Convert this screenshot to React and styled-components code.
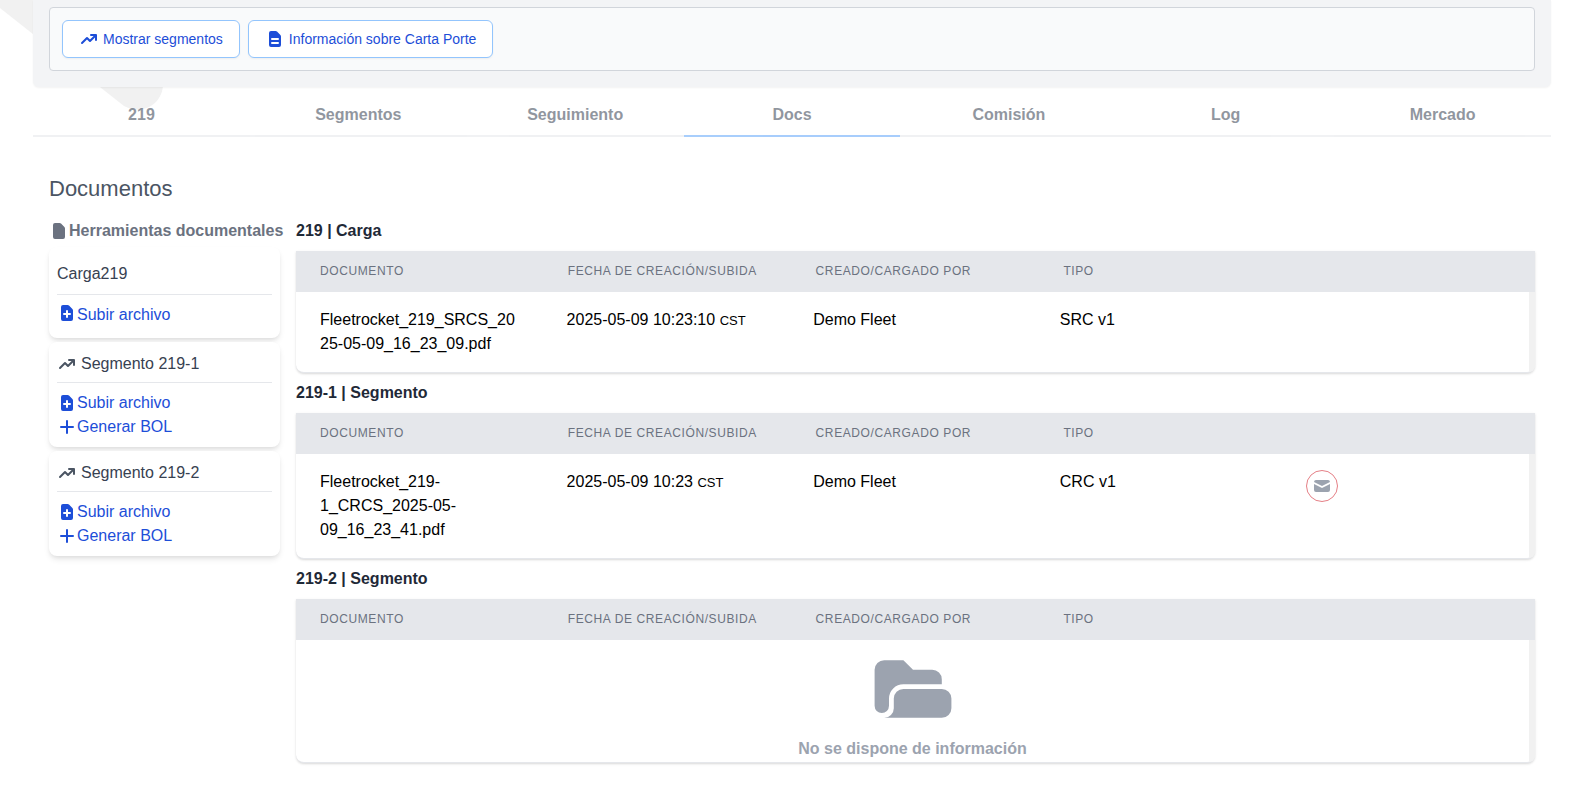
import React from 'react';
import styled, { createGlobalStyle } from 'styled-components';
import {
  HiDocument,
  HiDocumentAdd,
  HiDocumentText,
  HiFolderOpen,
  HiMail,
  HiPlus,
  HiTrendingUp,
} from 'react-icons/hi';

const GlobalStyle = createGlobalStyle`
  *, *::before, *::after {
    box-sizing: border-box;
  }

  body {
    margin: 0;
    background: #fff;
    color: #000;
    font-family: "Liberation Sans", Arial, sans-serif;
    font-size: 16px;
    line-height: 24px;
  }
`;

const Page = styled.div`
  position: relative;
  padding: 0 29px 0 33px;
`;

// decorative blob behind the header
const Backdrop = styled.svg`
  position: absolute;
  top: 0;
  left: 0;
  z-index: -1;
`;

const Panel = styled.header`
  padding: 7px 16px 16px;
  background: #f3f4f6;
  border-radius: 0 0 6px 6px;
  box-shadow: 0 1px 2px rgba(0, 0, 0, 0.05);
`;

const Toolbar = styled.div`
  display: flex;
  gap: 8px;
  padding: 12px;
  background: #f9fafb;
  border: 1px solid #d1d5db;
  border-radius: 4px;
`;

const ToolbarButton = styled.button`
  display: flex;
  align-items: center;
  gap: 4px;
  padding: 8px 16px;
  background: #fff;
  color: #1d4ed8;
  border: 1px solid #93c5fd;
  border-radius: 6px;
  box-shadow: 0 1px 2px rgba(0, 0, 0, 0.05);
  font-family: inherit;
  font-size: 14px;
  line-height: 20px;
  cursor: pointer;
`;

const Tabs = styled.nav`
  display: flex;
`;

const Tab = styled.a`
  flex: 1;
  padding: 16px 8px 8px;
  border-bottom: 2px solid ${({ $active }) => ($active ? '#60a5fa' : '#e5e7eb')};
  color: #374151;
  font-weight: 700;
  text-align: center;
  text-decoration: none;
  opacity: 0.55;
`;

const Content = styled.main`
  padding: 36px 16px 16px;
`;

const Title = styled.h1`
  margin: 0 0 6px;
  color: #4b5563;
  font-size: 22px;
  font-weight: 400;
  line-height: 32px;
`;

const Columns = styled.div`
  display: grid;
  grid-template-columns: 247px minmax(0, 1fr);
`;

const Sidebar = styled.aside`
  display: flex;
  flex-direction: column;
  gap: 4px;
  padding: 8px 16px 0 0;
`;

const SidebarTitle = styled.h2`
  display: flex;
  align-items: center;
  margin: 0;
  color: #6b7280;
  font-size: 16px;
  font-weight: 700;
  white-space: nowrap;

  svg {
    flex-shrink: 0;
  }
`;

const Card = styled.section`
  padding: ${({ $main }) => ($main ? '7px 8px 11px' : '8px')};
  background: #fff;
  border-radius: 8px;
  box-shadow: 0 4px 6px -1px rgba(0, 0, 0, 0.1), 0 2px 4px -1px rgba(0, 0, 0, 0.06);
`;

const CardTitle = styled.h3`
  display: flex;
  align-items: center;
  gap: 4px;
  margin: 0 0 8px;
  padding: ${({ $main }) => ($main ? '8px 0' : '2px 0 6px')};
  border-bottom: 1px solid #e5e7eb;
  color: #374151;
  font-size: 16px;
  font-weight: 400;

  svg {
    color: #4b5563;
  }
`;

const CardLink = styled.a`
  display: flex;
  align-items: ${({ $main }) => ($main ? 'flex-start' : 'center')};
  color: #1d4ed8;
  text-decoration: none;
`;

const SectionTitle = styled.h2`
  margin: 0;
  padding: 8px 0;
  color: #1f2937;
  font-size: 16px;
  font-weight: 700;
`;

const Table = styled.table`
  display: block;
  background: #fff;
  border-bottom: 1px solid #e5e7eb;
  border-radius: 0 0 8px 8px;
  box-shadow: 0 1px 3px rgba(0, 0, 0, 0.1), 0 1px 2px rgba(0, 0, 0, 0.06);
`;

const Head = styled.thead`
  display: block;
  background: #e5e7eb;
  border-bottom: 1px solid #e5e7eb;
`;

// the right border is the scroll gutter
const Body = styled.tbody`
  display: block;
  border-right: 6px solid #f1f1f1;
  border-bottom-right-radius: 6px;
`;

const Row = styled.tr`
  display: grid;
  grid-template-columns: repeat(5, minmax(0, 1fr));
`;

const HeadCell = styled.th`
  padding: 12px 24px;
  color: #6b7280;
  font-size: 12px;
  font-weight: 400;
  line-height: 16px;
  letter-spacing: 0.05em;
  text-align: left;
  text-transform: uppercase;
`;

const Cell = styled.td`
  padding: 16px 24px;
  overflow-wrap: break-word;
`;

const Zone = styled.small`
  font-size: 13px;
`;

const MailButton = styled.button`
  display: flex;
  align-items: center;
  justify-content: center;
  width: 32px;
  height: 32px;
  padding: 0;
  background: #fff;
  color: #9ca3af;
  border: 1px solid #e57f86;
  border-radius: 50%;
  cursor: pointer;
`;

const EmptyRow = styled.tr`
  display: block;
`;

const EmptyCell = styled.td`
  display: flex;
  flex-direction: column;
  align-items: center;
  padding: 1px 0;
  color: #9ca3af;
  font-weight: 700;
`;

const tabs = ['219', 'Segmentos', 'Seguimiento', 'Docs', 'Comisión', 'Log', 'Mercado'];

const columns = ['Documento', 'Fecha de creación/subida', 'Creado/cargado por', 'Tipo', ''];

const segments = ['Segmento 219-1', 'Segmento 219-2'];

const sections = [
  {
    title: '219 | Carga',
    docs: [
      {
        name: 'Fleetrocket_219_SRCS_2025-05-09_16_23_09.pdf',
        date: '2025-05-09 10:23:10',
        author: 'Demo Fleet',
        type: 'SRC v1',
      },
    ],
  },
  {
    title: '219-1 | Segmento',
    docs: [
      {
        name: 'Fleetrocket_219-1_CRCS_2025-05-09_16_23_41.pdf',
        date: '2025-05-09 10:23',
        author: 'Demo Fleet',
        type: 'CRC v1',
        mail: true,
      },
    ],
  },
  { title: '219-2 | Segmento', docs: [] },
];

const DocumentTable = ({ title, docs }) => (
  <section>
    <SectionTitle>{title}</SectionTitle>
    <Table aria-label={title}>
      <Head>
        <Row>
          {columns.map((column) => (
            <HeadCell key={column} scope="col">{column}</HeadCell>
          ))}
        </Row>
      </Head>
      <Body>
        {docs.map((doc) => (
          <Row key={doc.name}>
            <Cell>{doc.name}</Cell>
            <Cell>{doc.date} <Zone>CST</Zone></Cell>
            <Cell>{doc.author}</Cell>
            <Cell>{doc.type}</Cell>
            <Cell>
              {doc.mail && (
                <MailButton type="button" aria-label="Enviar por correo">
                  <HiMail size={20} />
                </MailButton>
              )}
            </Cell>
          </Row>
        ))}
        {docs.length === 0 && (
          <EmptyRow>
            <EmptyCell>
              <HiFolderOpen size={96} />
              No se dispone de información
            </EmptyCell>
          </EmptyRow>
        )}
      </Body>
    </Table>
  </section>
);

const App = () => {
  return (
    <Page>
      <GlobalStyle />
      <Backdrop width="170" height="112" viewBox="0 0 170 112" aria-hidden="true">
        <path d="M0 0H163V84C163 104 142 116 124 106L0 8Z" fill="#f1f1f1" />
      </Backdrop>

      <Panel>
        <Toolbar>
          <ToolbarButton type="button">
            <HiTrendingUp size={20} />
            Mostrar segmentos
          </ToolbarButton>
          <ToolbarButton type="button">
            <HiDocumentText size={20} />
            Información sobre Carta Porte
          </ToolbarButton>
        </Toolbar>
      </Panel>

      <Tabs>
        {tabs.map((tab) => (
          <Tab key={tab} href="#" $active={tab === 'Docs'}>{tab}</Tab>
        ))}
      </Tabs>

      <Content>
        <Title>Documentos</Title>
        <Columns>
          <Sidebar>
            <SidebarTitle>
              <HiDocument size={20} />
              Herramientas documentales
            </SidebarTitle>
            <Card $main>
              <CardTitle $main>Carga219</CardTitle>
              <CardLink $main href="#">
                <HiDocumentAdd size={20} />
                Subir archivo
              </CardLink>
            </Card>
            {segments.map((segment) => (
              <Card key={segment}>
                <CardTitle>
                  <HiTrendingUp size={20} />
                  {segment}
                </CardTitle>
                <CardLink href="#">
                  <HiDocumentAdd size={20} />
                  Subir archivo
                </CardLink>
                <CardLink href="#">
                  <HiPlus size={20} />
                  Generar BOL
                </CardLink>
              </Card>
            ))}
          </Sidebar>

          <div>
            {sections.map((section) => (
              <DocumentTable key={section.title} {...section} />
            ))}
          </div>
        </Columns>
      </Content>
    </Page>
  );
};

export default App;
